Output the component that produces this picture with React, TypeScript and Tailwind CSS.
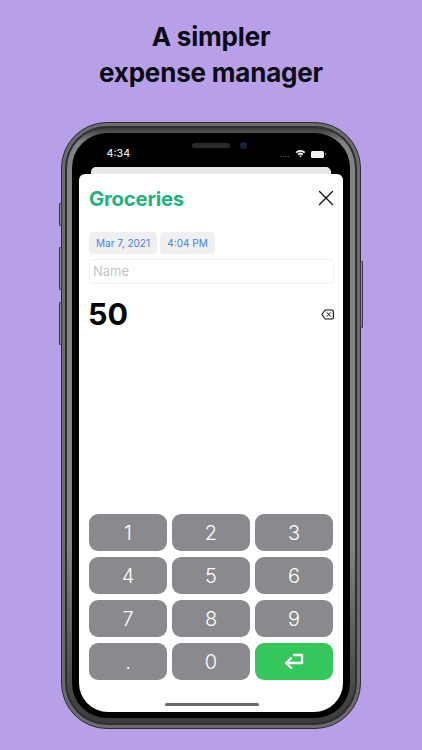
import React from "react";

const keys = ["1", "2", "3", "4", "5", "6", "7", "8", "9", ".", "0"];

function SideButton({ className }: { className: string }) {
  return <div className={"absolute w-[3px] rounded-[1px] border border-[#3b3648] bg-[#8d8d8d] " + className} />;
}

export default function App() {
  return (
    <div className="relative flex h-[750px] w-[422px] flex-col items-center overflow-hidden bg-[#b8a0e9] font-['Inter',sans-serif]">
      <h1 className="mt-[19px] h-[103px] text-center text-[26px] font-bold leading-[36px] tracking-[-0.2px] text-[#0b0b14]">
        A simpler
        <br />
        expense manager
      </h1>

      <div className="relative h-[607px] w-[300px]">
        <SideButton className="left-[-2px] top-[81px] h-[23px]" />
        <SideButton className="left-[-2px] top-[125px] h-[43px]" />
        <SideButton className="left-[-2px] top-[180px] h-[43px]" />
        <SideButton className="right-[-2px] top-[139px] h-[67px]" />

        <div className="h-full w-full rounded-[46px] border border-[#2f2b38] bg-[#6b6b6d] p-[3px]">
          <div className="h-full w-full rounded-[42px] bg-[#2f2f31] p-[2px]">
            <div className="h-full w-full rounded-[40px] bg-[linear-gradient(180deg,#3a3a3c_0px,#838385_14px,#838385_70%,#3a3a3c_100%)] p-[5px]">
              <div className="relative flex h-full w-full flex-col rounded-[35px] bg-black px-[7px] pb-[6px]">
                <div className="relative h-[34px] shrink-0">
                  <span className="absolute left-[27.5px] top-[14px] text-[10.5px] font-medium leading-[13px] text-[#e8e8e8]">4:34</span>
                  <div className="absolute left-[113px] top-[10px] h-[5px] w-[38px] rounded-full bg-[#2b2b2d]" />
                  <div className="absolute left-[161px] top-[9px] h-[7px] w-[7px] rounded-full bg-[#14233f]" />
                  <div className="absolute left-[201px] top-[23px] flex gap-[1.5px]">
                    <i className="h-[1px] w-[1px] bg-[#555]" />
                    <i className="h-[1px] w-[1px] bg-[#555]" />
                    <i className="h-[1px] w-[1px] bg-[#555]" />
                    <i className="h-[1px] w-[1px] bg-[#555]" />
                  </div>
                  <svg className="absolute left-[216px] top-[15.5px]" width="11" height="9" viewBox="0 0 11 9">
                    <path d="M0.6 3 A7 7 0 0 1 10.4 3 L9.2 4.2 A5.3 5.3 0 0 0 1.8 4.2 Z" fill="#f2f2f2" />
                    <path d="M2.6 5 A4.2 4.2 0 0 1 8.4 5 L7.2 6.2 A2.5 2.5 0 0 0 3.8 6.2 Z" fill="#f2f2f2" />
                    <path d="M4.4 6.9 A1.5 1.5 0 0 1 6.6 6.9 L5.5 8.2 Z" fill="#f2f2f2" />
                  </svg>
                  <div className="absolute left-[232px] top-[17.5px] h-[7px] w-[13px] rounded-[1.5px] bg-[#f2f2f2]" />
                  <div className="absolute left-[246px] top-[20px] h-[2px] w-[1px] bg-[#888]" />
                </div>

                <div className="mx-[12px] h-[7px] shrink-0 rounded-t-[5px] bg-[#e9e9eb]" />

                <div className="flex min-h-0 flex-1 flex-col rounded-b-[29px] rounded-t-[6px] bg-white pl-[10px] pr-[9px]">
                  <div className="flex h-[50px] shrink-0 items-center justify-between pt-[1px]">
                    <span className="text-[20.3px] font-bold leading-none tracking-[-0.2px] text-[#1db47c]">Groceries</span>
                    <svg width="16" height="16" viewBox="0 0 16 16" className="mb-[3px]">
                      <path d="M1.5 1.5 L14.5 14.5 M14.5 1.5 L1.5 14.5" stroke="#111" strokeWidth="1.3" strokeLinecap="round" />
                    </svg>
                  </div>

                  <div className="mt-[8px] flex shrink-0 gap-[3px]">
                    <div className="flex h-[22px] w-[68px] items-center justify-center rounded-[4px] bg-[#efeff2] text-[10px] text-[#3e85e0]">Mar 7, 2021</div>
                    <div className="flex h-[22px] w-[55px] items-center justify-center rounded-[4px] bg-[#efeff2] text-[10px] text-[#3e85e0]">4:04 PM</div>
                  </div>

                  <div className="mt-[5px] flex h-[25px] shrink-0 items-center rounded-[4px] border border-[#f0f0f2] pl-[3px] text-[13px] text-[#c4c4c6]">Name</div>

                  <div className="mt-[12px] flex h-[36px] shrink-0 items-center justify-between">
                    <span className="ml-[-1px] text-[30.5px] font-bold leading-none text-[#050505]">50</span>
                    <svg width="13" height="11" viewBox="0 0 13 11">
                      <path d="M4.2 1 H11 a1.3 1.3 0 0 1 1.3 1.3 V8.7 a1.3 1.3 0 0 1 -1.3 1.3 H4.2 L0.8 5.5 Z" fill="none" stroke="#111" strokeWidth="1.1" strokeLinejoin="round" />
                      <path d="M6 3.6 L9.6 7.4 M9.6 3.6 L6 7.4" stroke="#111" strokeWidth="1" strokeLinecap="round" />
                    </svg>
                  </div>

                  <div className="mt-auto mr-[1px] grid grid-cols-3 gap-x-[5px] gap-y-[6px]">
                    {keys.map((k) => (
                      <div key={k} className="flex h-[37px] items-center justify-center rounded-[9px] bg-[#8a8a8e] text-[20px] font-light text-white">
                        {k}
                      </div>
                    ))}
                    <div className="flex h-[37px] items-center justify-center rounded-[9px] bg-[#36c75c]">
                      <svg width="20" height="17" viewBox="0 0 20 17">
                        <path d="M10 2 H18 V10 H2.5 M7.2 5.2 L2 10 L7.2 14.8" fill="none" stroke="#fff" strokeWidth="2.3" strokeLinecap="round" strokeLinejoin="round" />
                      </svg>
                    </div>
                  </div>

                  <div className="mx-auto mb-[6px] mt-[23px] h-[3px] w-[94px] shrink-0 rounded-full bg-[#6a6a6c]" />
                </div>
              </div>
            </div>
          </div>
        </div>
      </div>
    </div>
  );
}
